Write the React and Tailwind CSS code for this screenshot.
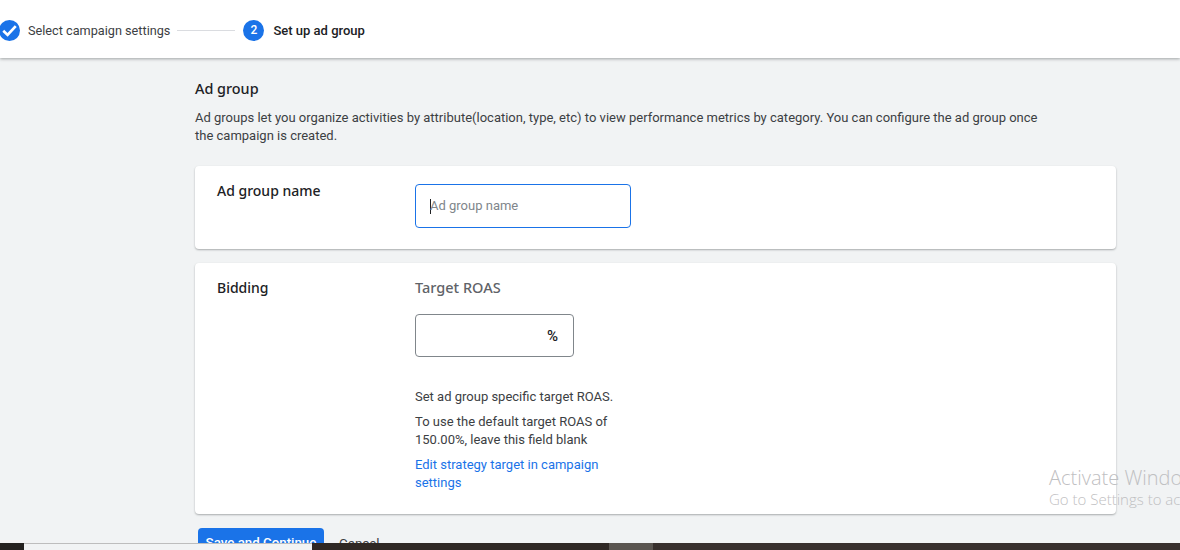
import React from 'react';

export default function App() {
  return (
    <div className="relative h-[550px] w-[1180px] overflow-hidden bg-[#f1f3f4] font-['Roboto',sans-serif] text-[#3c4043]">
      {/* Stepper */}
      <header className="relative z-10 flex h-[58px] items-center bg-white pt-[3px] shadow-[0_1px_3px_rgba(60,64,67,0.45)]">
        <div className="ml-[-1px] flex h-[21px] w-[21px] items-center justify-center rounded-full bg-[#1a73e8]">
          <svg width="17" height="17" viewBox="0 0 15 15" fill="none">
            <path d="M2 7.8 L5.8 11.4 L13 3.6" stroke="white" strokeWidth="2.4" />
          </svg>
        </div>
        <span className="ml-[8px] text-[12.7px]">Select campaign settings</span>
        <div className="ml-[7px] h-px w-[58px] bg-[#dadce0]" />
        <div className="ml-[8px] flex h-[21px] w-[21px] items-center justify-center rounded-full bg-[#1a73e8] pb-px text-[12px] font-medium text-white">2</div>
        <span className="ml-[9px] text-[13px] font-medium text-[#202124]">Set up ad group</span>
      </header>

      <main className="ml-[195px] w-[921px] pt-[21px]">
        <h1 className="font-['Noto_Sans',sans-serif] text-[14.4px] leading-[20px] font-medium text-[#202124]">Ad group</h1>
        <p className="mt-[10px] w-[860px] text-[13px] leading-[18px]">
          Ad groups let you organize activities by attribute(location, type, etc) to view performance metrics by category. You can configure the ad group once the campaign is created.
        </p>

        <section className="mt-[21px] flex h-[83px] rounded-[4px] bg-white pl-[22px] pt-[17px] shadow-[0_1px_2px_rgba(60,64,67,0.4)]">
          <h2 className="w-[198px] font-['Noto_Sans',sans-serif] text-[14px] leading-[15px] font-medium text-[#202124]">Ad group name</h2>
          <div className="mt-px flex h-[44px] w-[216px] items-center rounded-[4px] border border-[#1a73e8] pl-[14px] text-[13px] text-[#80868b]">
            <span className="h-[15px] w-px bg-[#202124]" />
            <span className="-ml-px">Ad group name</span>
          </div>
        </section>

        <section className="mt-[14px] flex h-[251px] rounded-[4px] bg-white pl-[22px] pt-[17px] shadow-[0_1px_2px_rgba(60,64,67,0.4)]">
          <h2 className="w-[198px] font-['Noto_Sans',sans-serif] text-[14px] leading-[16px] font-medium text-[#202124]">Bidding</h2>
          <div className="w-[200px]">
            <div className="font-['Noto_Sans',sans-serif] text-[14.5px] leading-[15px] font-medium text-[#5f6368]">Target ROAS</div>
            <div className="mt-[19px] flex h-[43px] w-[159px] items-center justify-end rounded-[4px] border border-[#80868b] pr-[15px] pt-[2px] text-[15px] font-medium text-[#202124]">%</div>
            <p className="mt-[31px] text-[13px] leading-[18px]">Set ad group specific target ROAS.</p>
            <p className="mt-[7px] text-[13px] leading-[18px]">To use the default target ROAS of 150.00%, leave this field blank</p>
            <a className="mt-[7px] block text-[13px] leading-[18px] text-[#1a73e8]">Edit strategy target in campaign settings</a>
          </div>
        </section>

        <div className="mt-[14px] flex items-start pl-[3px]">
          <button className="h-[36px] w-[126px] rounded-[4px] bg-[#1a73e8] pb-[6px] text-[13.3px] font-medium text-white">Save and Continue</button>
          <button className="ml-[15px] pt-[6px] text-[13.3px] text-[#3c4043]">Cancel</button>
        </div>
      </main>

      {/* Windows watermark */}
      <div className="absolute left-[1049px] top-[465px] z-20 whitespace-nowrap font-['Open_Sans',sans-serif] font-light text-[#bfc0c2]">
        <div className="text-[20px] leading-[25px]">Activate Windows</div>
        <div className="text-[15px] leading-[19px]">Go to Settings to activate Windows.</div>
      </div>

      {/* Desktop strip showing below the window */}
      <div className="absolute bottom-0 left-0 z-30 flex h-[7px] w-full bg-[#2f2824]">
        <div className="w-[24px] bg-[#23211f]" />
        <div className="w-[288px] border-t border-[#bdbdbd] bg-[#f1f3f4]" />
        <div className="w-[297px] bg-[#2f2824]" />
        <div className="w-[44px] bg-[#5a5550]" />
        <div className="flex-1 bg-[#38302d]" />
      </div>
    </div>
  );
}
